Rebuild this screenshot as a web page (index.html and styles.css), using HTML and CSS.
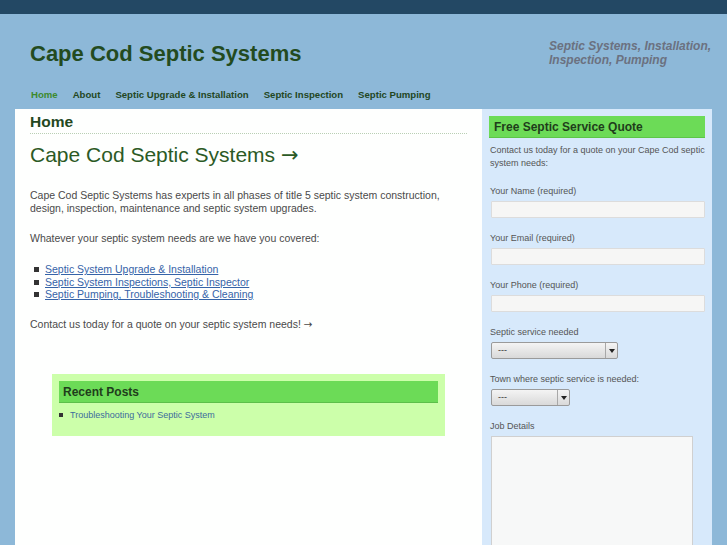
FILE: index.html
```html
<!DOCTYPE html>
<html>
<head>
<meta charset="utf-8">
<title>Cape Cod Septic Systems</title>
<link rel="stylesheet" href="styles.css">
</head>
<body>
<div class="topbar"></div>
<header class="site-header">
  <div class="header-row">
    <div class="site-title">Cape Cod Septic Systems</div>
    <div class="tagline">Septic Systems, Installation, Inspection, Pumping</div>
  </div>
  <nav class="nav">
    <a class="nav-item current" href="#">Home</a>
    <a class="nav-item" href="#">About</a>
    <a class="nav-item" href="#">Septic Upgrade &amp; Installation</a>
    <a class="nav-item" href="#">Septic Inspection</a>
    <a class="nav-item" href="#">Septic Pumping</a>
  </nav>
</header>
<div class="main">
  <div class="content">
    <h2 class="page-title">Home</h2>
    <h1 class="post-title">Cape Cod Septic Systems <span class="arrow">→</span></h1>
    <p class="text first">Cape Cod Septic Systems has experts in all phases of title 5 septic system construction, design, inspection, maintenance and septic system upgrades.</p>
    <p class="text">Whatever your septic system needs are we have you covered:</p>
    <ul class="links">
      <li><a href="#">Septic System Upgrade &amp; Installation</a></li>
      <li><a href="#">Septic System Inspections, Septic Inspector</a></li>
      <li><a href="#">Septic Pumping, Troubleshooting &amp; Cleaning</a></li>
    </ul>
    <p class="text">Contact us today for a quote on your septic system needs! <span class="arrow">→</span></p>
    <div class="recent">
      <h3 class="recent-title">Recent Posts</h3>
      <ul class="recent-list">
        <li><a href="#">Troubleshooting Your Septic System</a></li>
      </ul>
    </div>
  </div>
  <aside class="sidebar">
    <h3 class="side-title">Free Septic Service Quote</h3>
    <p class="intro">Contact us today for a quote on your Cape Cod septic system needs:</p>
    <div class="field first">
      <label class="label">Your Name (required)</label>
      <input class="input" type="text">
    </div>
    <div class="field">
      <label class="label">Your Email (required)</label>
      <input class="input" type="text">
    </div>
    <div class="field">
      <label class="label">Your Phone (required)</label>
      <input class="input" type="text">
    </div>
    <div class="field">
      <label class="label">Septic service needed</label>
      <div class="select wide"><span class="select-text">---</span><span class="select-btn"><span class="tri"></span></span></div>
    </div>
    <div class="field">
      <label class="label">Town where septic service is needed:</label>
      <div class="select narrow"><span class="select-text">---</span><span class="select-btn"><span class="tri"></span></span></div>
    </div>
    <div class="field">
      <label class="label">Job Details</label>
      <textarea class="textarea"></textarea>
    </div>
  </aside>
</div>
</body>
</html>
```
FILE: styles.css
```css
html, body {
  margin: 0;
  padding: 0;
  overflow: hidden;
}
body {
  background: #8db8d8;
  font-family: "Liberation Sans", Arial, sans-serif;
  width: 727px;
  height: 545px;
}
.topbar {
  height: 14px;
  background: #234864;
}
.site-header {
  padding: 26px 13px 0 30px;
}
.header-row {
  display: flex;
  justify-content: space-between;
  align-items: flex-start;
  height: 28px;
}
.site-title {
  font-size: 22px;
  line-height: 28px;
  font-weight: bold;
  color: #234b1f;
}
.tagline {
  width: 165px;
  margin-top: 0;
  font-size: 12px;
  line-height: 13.5px;
  font-weight: bold;
  font-style: italic;
  color: #6b7180;
}
.nav {
  display: flex;
  gap: 15px;
  margin-top: 21px;
  height: 20px;
  padding-left: 1px;
}
.nav-item {
  font-size: 9.6px;
  line-height: 12px;
  font-weight: bold;
  color: #23471f;
  text-decoration: none;
}
.nav-item.current {
  color: #3d8a2e;
}
.main {
  display: flex;
  margin-left: 15px;
  height: 450px;
}
.content {
  width: 437px;
  padding: 4px 15px 0 15px;
  background: #fefffe;
}
.page-title {
  margin: 0;
  font-size: 15.5px;
  line-height: 18px;
  font-weight: bold;
  color: #24481f;
  padding-bottom: 2px;
  border-bottom: 1px dotted #b9cfb4;
}
.post-title {
  margin: 8px 0 0 0;
  font-size: 21px;
  line-height: 26px;
  font-weight: normal;
  color: #2b5a25;
}
.arrow {
  font-family: "DejaVu Sans", sans-serif;
  font-size: 1em;
  line-height: 0;
}
.text {
  margin: 17px 0 0 0;
  font-size: 10.5px;
  line-height: 13px;
  color: #4a4a4a;
}
.text.first {
  margin-top: 21px;
}
.links {
  list-style: none;
  margin: 18px 0 0 0;
  padding: 0;
  font-size: 10.5px;
  line-height: 12.5px;
}
.links li::before,
.recent-list li::before {
  content: "";
  display: inline-block;
  width: 5px;
  height: 5px;
  background: #333;
  margin: 0 6px 1px 4px;
  vertical-align: middle;
}
.links a {
  color: #3563a8;
  text-decoration: underline;
}
.recent {
  margin: 43px 22px 0 22px;
  padding: 7px 7px 15px 7px;
  background: #ccffaa;
}
.recent-title {
  margin: 0;
  padding: 2px 4px 1px 4px;
  font-size: 12px;
  line-height: 18px;
  font-weight: bold;
  color: #1f3d1b;
  background: #6cdb57;
  border-bottom: 1px solid #5cbf4a;
}
.recent-list {
  list-style: none;
  margin: 6px 0 0 0;
  padding: 0;
  font-size: 9px;
  line-height: 12px;
}
.recent-list li::before {
  width: 4px;
  height: 4px;
  margin: 0 7px 1px 0;
}
.recent-list a {
  color: #3c6c9c;
  text-decoration: none;
}
.sidebar {
  width: 216px;
  padding: 7px 7px 0 7px;
  background: #d7e9fb;
}
.side-title {
  margin: 0;
  padding-left: 5px;
  height: 21px;
  font-size: 12px;
  line-height: 22px;
  font-weight: bold;
  color: #1f3d1b;
  background: #6cdb57;
  border-bottom: 1px solid #5cc548;
}
.intro {
  margin: 6px 0 0 1px;
  font-size: 9px;
  line-height: 13px;
  color: #555;
}
.field {
  margin-top: 14px;
}
.field.first {
  margin-top: 15px;
}
.label {
  display: block;
  margin-left: 1px;
  font-size: 9px;
  line-height: 13px;
  color: #555;
}
.input {
  display: block;
  box-sizing: border-box;
  width: 214px;
  height: 17px;
  margin: 3px 0 0 2px;
  padding: 0;
  background: #f6f6f5;
  border: 1px solid #dcdcdc;
  border-radius: 1px;
  outline: none;
}
.select {
  display: flex;
  box-sizing: border-box;
  height: 17px;
  margin: 3px 0 0 2px;
  border: 1px solid #9a9a9a;
  border-radius: 2px;
  background: linear-gradient(#f4f4f4, #d9d9d9);
}
.select.wide {
  width: 127px;
}
.select.narrow {
  width: 79px;
}
.select-text {
  flex: 1;
  padding-left: 6px;
  font-size: 9px;
  line-height: 14px;
  color: #333;
}
.select-btn {
  width: 11px;
  border-left: 1px solid #a8a8a8;
  display: flex;
  align-items: center;
  justify-content: center;
}
.tri {
  width: 0;
  height: 0;
  border-left: 3px solid transparent;
  border-right: 3px solid transparent;
  border-top: 4px solid #222;
}
.textarea {
  display: block;
  box-sizing: border-box;
  width: 202px;
  height: 130px;
  margin: 3px 0 0 2px;
  background: #f7f8f8;
  border: 1px solid #d0d0d0;
  padding: 0;
  outline: none;
}
```
